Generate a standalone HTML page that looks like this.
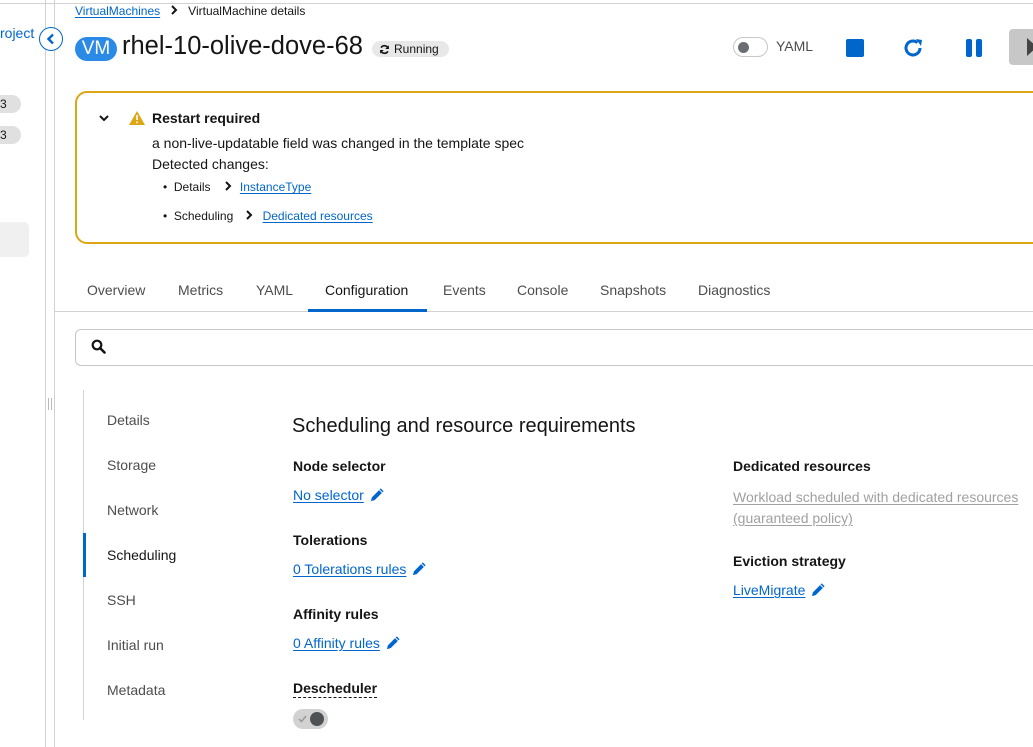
<!DOCTYPE html>
<html><head><style>
*{box-sizing:border-box;margin:0;padding:0}
body{width:1033px;height:747px;overflow:hidden;background:#fff;font-family:"Liberation Sans",sans-serif;color:#151515;position:relative}
.a{position:absolute}
.link{color:#0066cc;text-decoration:underline;text-underline-offset:2px}
.tab{position:absolute;top:282px;font-size:14px;color:#4d4d4d}
.nav{position:absolute;left:107px;font-size:14px;color:#4d4d4d}
.lbl{position:absolute;font-size:14px;font-weight:bold;color:#151515}
.val{position:absolute;font-size:14px}
.pen{display:inline-block;vertical-align:-2px;margin-left:6px}
.chev{display:inline-block;vertical-align:0}
</style></head><body>
<svg width="0" height="0" style="position:absolute"><defs><symbol id="p" viewBox="0 0 16 16"><path d="M11.5 1.5l3 3L5 14l-4 1 1-4z" fill="#0066cc"/><path d="M10 3l3 3" stroke="#fff" stroke-width="1"/></symbol><symbol id="c" viewBox="0 0 8 10"><path d="M2 1l4 4-4 4" fill="none" stroke="#151515" stroke-width="2"/></symbol></defs></svg>
<div class="a" style="left:0;top:3px;width:1033px;height:1px;background:#d2d2d2"></div>
<div class="a" style="left:45px;top:0;width:1px;height:747px;background:#d2d2d2"></div>
<div class="a" style="left:54px;top:0;width:1px;height:747px;background:#d2d2d2"></div>
<div class="a" style="left:0;top:25px;font-size:14px;color:#0066cc">roject</div>
<div class="a" style="left:39px;top:27px;width:24px;height:24px;border:1.5px solid #0066cc;border-radius:50%;background:#fff"><svg class="a" style="left:6px;top:5px" width="10" height="12" viewBox="0 0 10 12"><path d="M7 1.5L2.5 6 7 10.5" fill="none" stroke="#0066cc" stroke-width="2.4"/></svg></div>
<div class="a" style="left:-10px;top:95px;width:31px;height:18px;border-radius:9px;background:#e0e0e0;font-size:12px;padding-left:10px;line-height:18px">3</div>
<div class="a" style="left:-10px;top:126px;width:31px;height:18px;border-radius:9px;background:#e0e0e0;font-size:12px;padding-left:10px;line-height:18px">3</div>
<div class="a" style="left:-5px;top:222px;width:34px;height:35px;border-radius:5px;background:#f0f0f0"></div>
<div class="a" style="left:48px;top:398px;width:4px;height:12px;border-left:1px solid #bbb;border-right:1px solid #bbb"></div>

<div class="a" style="left:75px;top:4px;font-size:12px"><span class="link">VirtualMachines</span><svg class="chev" style="margin:0 10px" width="8" height="10"><use href="#c"/></svg><span>VirtualMachine details</span></div>
<div class="a" style="left:75px;top:37px;width:42px;height:24px;border-radius:12px;background:#2b8ae6;color:#fff;font-size:19px;text-align:center;line-height:24px">VM</div>
<div class="a" style="left:122px;top:32px;font-size:25.5px">rhel-10-olive-dove-68</div>
<div class="a" style="left:372px;top:41px;width:77px;height:16px;border-radius:8px;background:#e8e8e8;font-size:12px;line-height:16px;padding-left:22px">Running<svg class="a" style="left:7px;top:3px" width="11" height="11" viewBox="0 0 12 12"><path d="M10 5A4.2 4.2 0 0 0 2.3 4M2 7a4.2 4.2 0 0 0 7.7 1" fill="none" stroke="#151515" stroke-width="1.8"/><path d="M10.8 1.5v4h-4zM1.2 10.5v-4h4z" fill="#151515"/></svg></div>

<div class="a" style="left:733px;top:37px;width:35px;height:20px;border:1px solid #c7c7c7;border-radius:10px"><div class="a" style="left:4px;top:4px;width:11px;height:11px;border-radius:50%;background:#6a6e73"></div></div>
<div class="a" style="left:776px;top:38px;font-size:14px;color:#4d4d4d">YAML</div>
<div class="a" style="left:846px;top:39px;width:18px;height:18px;background:#0066cc;border-radius:2px"></div>
<svg class="a" style="left:903px;top:37px" width="22" height="22" viewBox="0 0 22 22"><path d="M17 11a7 7 0 1 1-2.5-5.4" fill="none" stroke="#0066cc" stroke-width="3"/><path d="M13 2l6 1-1 6z" fill="#0066cc"/></svg>
<div class="a" style="left:966px;top:39px;width:6px;height:18px;background:#0066cc;border-radius:2px"></div>
<div class="a" style="left:976px;top:39px;width:6px;height:18px;background:#0066cc;border-radius:2px"></div>
<div class="a" style="left:1009px;top:29px;width:30px;height:36px;background:#c7c7c7;border-radius:4px"><div class="a" style="left:18px;top:9px;width:0;height:0;border-left:10px solid #444;border-top:9px solid transparent;border-bottom:9px solid transparent"></div></div>

<div class="a" style="left:75px;top:91px;width:980px;height:153px;border:2px solid #dca614;border-radius:12px"></div>
<svg class="a" style="left:99px;top:114px" width="10" height="8" viewBox="0 0 10 8"><path d="M1 2l4 4 4-4" fill="none" stroke="#151515" stroke-width="2"/></svg>
<svg class="a" style="left:129px;top:111px" width="16" height="14" viewBox="0 0 16 14"><path d="M8 0L16 14H0z" fill="#dca614"/><rect x="7.2" y="4" width="1.6" height="5" fill="#fff"/><rect x="7.2" y="10.5" width="1.6" height="1.6" fill="#fff"/></svg>
<div class="a" style="left:152px;top:110px;font-size:14px;font-weight:bold">Restart required</div>
<div class="a" style="left:152px;top:135px;font-size:14px">a non-live-updatable field was changed in the template spec</div>
<div class="a" style="left:152px;top:156px;font-size:14px">Detected changes:</div>
<div class="a" style="left:163px;top:180px;font-size:12px">•&nbsp; Details <svg class="chev" style="margin:0 8px 0 10px" width="8" height="10"><use href="#c"/></svg><span class="link">InstanceType</span></div>
<div class="a" style="left:163px;top:209px;font-size:12px">•&nbsp; Scheduling <svg class="chev" style="margin:0 10px 0 8px" width="8" height="10"><use href="#c"/></svg><span class="link">Dedicated resources</span></div>

<div class="tab" style="left:87px">Overview</div>
<div class="tab" style="left:178px">Metrics</div>
<div class="tab" style="left:256px">YAML</div>
<div class="tab" style="left:325px;color:#151515">Configuration</div>
<div class="tab" style="left:443px">Events</div>
<div class="tab" style="left:517px">Console</div>
<div class="tab" style="left:600px">Snapshots</div>
<div class="tab" style="left:698px">Diagnostics</div>
<div class="a" style="left:55px;top:311px;width:978px;height:1px;background:#d2d2d2"></div>
<div class="a" style="left:308px;top:309px;width:119px;height:3px;background:#0066cc"></div>

<div class="a" style="left:75px;top:329px;width:980px;height:37px;border:1px solid #c7c7c7;border-radius:6px"></div>
<svg class="a" style="left:91px;top:339px" width="15" height="15" viewBox="0 0 15 15"><circle cx="6" cy="6" r="4.3" fill="none" stroke="#151515" stroke-width="2.2"/><path d="M9 9l4.5 4.5" stroke="#151515" stroke-width="2.6" stroke-linecap="round"/></svg>

<div class="a" style="left:83px;top:390px;width:1px;height:330px;background:#d2d2d2"></div>
<div class="a" style="left:83px;top:533px;width:3px;height:44px;background:#0066cc"></div>
<div class="nav" style="top:412px">Details</div>
<div class="nav" style="top:457px">Storage</div>
<div class="nav" style="top:502px">Network</div>
<div class="nav" style="top:547px;color:#151515">Scheduling</div>
<div class="nav" style="top:592px">SSH</div>
<div class="nav" style="top:637px">Initial run</div>
<div class="nav" style="top:682px">Metadata</div>

<div class="a" style="left:292px;top:415px;font-size:20px">Scheduling and resource requirements</div>
<div class="lbl" style="left:293px;top:458px">Node selector</div>
<div class="val" style="left:293px;top:487px"><span class="link">No selector</span><svg class="pen" width="15" height="15"><use href="#p"/></svg></div>
<div class="lbl" style="left:293px;top:532px">Tolerations</div>
<div class="val" style="left:293px;top:561px"><span class="link">0 Tolerations rules</span><svg class="pen" width="15" height="15"><use href="#p"/></svg></div>
<div class="lbl" style="left:293px;top:606px">Affinity rules</div>
<div class="val" style="left:293px;top:635px"><span class="link">0 Affinity rules</span><svg class="pen" width="15" height="15"><use href="#p"/></svg></div>
<div class="lbl" style="left:293px;top:680px;border-bottom:1px dashed #151515;padding-bottom:1px">Descheduler</div>
<div class="a" style="left:293px;top:709px;width:35px;height:20px;border-radius:10px;background:#d2d2d2"><div class="a" style="left:17px;top:3px;width:14px;height:14px;border-radius:50%;background:#4f5255"></div><svg class="a" style="left:5px;top:6px" width="9" height="8" viewBox="0 0 9 8"><path d="M1 4l2.5 2.5L8 1" fill="none" stroke="#999" stroke-width="1.5"/></svg></div>

<div class="lbl" style="left:733px;top:458px">Dedicated resources</div>
<div class="val" style="left:733px;top:487px;color:#a0a0a0;line-height:21px;text-decoration:underline;text-underline-offset:2px">Workload scheduled with dedicated resources<br>(guaranteed policy)</div>
<div class="lbl" style="left:733px;top:553px">Eviction strategy</div>
<div class="val" style="left:733px;top:582px"><span class="link">LiveMigrate</span><svg class="pen" width="15" height="15"><use href="#p"/></svg></div>
</body></html>
